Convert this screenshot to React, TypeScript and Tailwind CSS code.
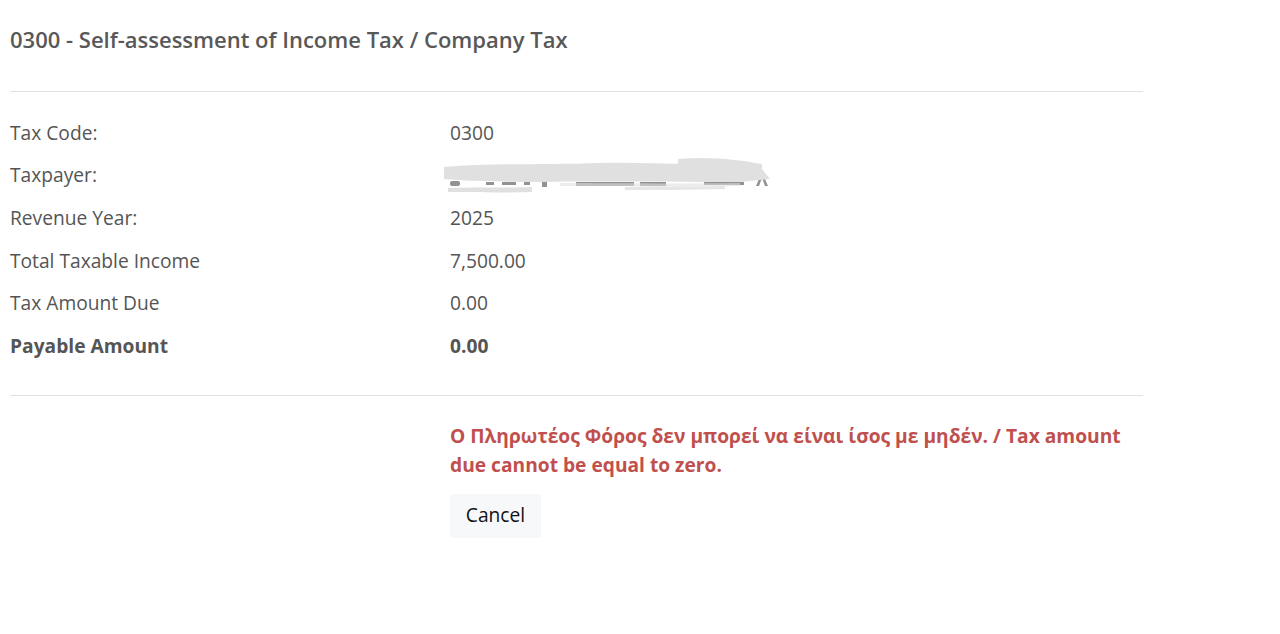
import React from "react";

const ROWS: { label: string; value: string; bold?: boolean; redacted?: boolean }[] = [
  { label: "Tax Code:", value: "0300" },
  { label: "Taxpayer:", value: "", redacted: true },
  { label: "Revenue Year:", value: "2025" },
  { label: "Total Taxable Income", value: "7,500.00" },
  { label: "Tax Amount Due", value: "0.00" },
  { label: "Payable Amount", value: "0.00", bold: true },
];

// scribbled-out taxpayer name
function Redacted() {
  return (
    <svg width="335" height="42" viewBox="0 0 335 42" className="-ml-[10px]">
      <g fill="#4a4a4a" opacity="0.6">
        <rect x="10" y="26" width="10" height="5" rx="2" />
        <rect x="46" y="27" width="8" height="3" />
        <rect x="62" y="27" width="14" height="3" />
        <rect x="84" y="27" width="6" height="3" />
        <rect x="102" y="26" width="5" height="6" />
        <rect x="136" y="27" width="58" height="4" />
        <rect x="200" y="27" width="26" height="4" />
        <rect x="264" y="27" width="40" height="3" />
        <path d="M316 31 L322 17 L328 31 L325 31 L322 23 L319 31 Z" />
      </g>
      <g fill="#e0e0e0">
        <path d="M4 12 C50 8 100 10 160 8 C200 7 230 10 250 8 L322 14 L330 24 L300 27 C220 27 150 26 100 27 C60 27 30 26 4 24 Z" />
        <path d="M238 4 C270 1 300 5 322 9 L322 15 C290 12 260 10 238 9 Z" />
        <path d="M120 28 C170 28 230 29 300 28 L300 31 C230 32 170 31 120 31 Z" opacity="0.6" />
        <path d="M8 33 C40 32 70 33 92 32 L92 37 C60 38 30 37 8 37 Z" />
        <path d="M185 32 C215 31 250 32 285 31 L285 34 C250 35 215 35 185 35 Z" opacity="0.8" />
      </g>
    </svg>
  );
}

export default function App() {
  return (
    <div
      className="min-h-[634px] bg-white pl-[10px] pt-[22px] text-[#555]"
      style={{ fontFamily: '"Open Sans", "Noto Sans", sans-serif' }}
    >
      <div className="w-[1133px]">
        <h1 className="text-[22px] font-semibold leading-[34px] text-[#585858]">
          0300 - Self-assessment of Income Tax / Company Tax
        </h1>
        <hr className="mt-[35px] border-t border-[#e2e2e2]" />
        <div className="pt-[20px] pb-[27px]">
          {ROWS.map((r) => (
            <div key={r.label} className="flex h-[42.6px] items-center text-[19.2px]">
              <div className={`w-[440px] ${r.bold ? "font-bold" : ""}`}>{r.label}</div>
              <div className={r.bold ? "font-bold" : ""}>
                {r.redacted ? <Redacted /> : r.value}
              </div>
            </div>
          ))}
        </div>
        <hr className="border-t border-[#e2e2e2]" />
        <div className="pl-[440px] pt-[25px]">
          <p className="text-[19.2px] font-bold leading-[29px] text-[#c0504d]">
            Ο Πληρωτέος Φόρος δεν μπορεί να είναι ίσος με μηδέν. / Tax amount due cannot be equal to zero.
          </p>
          <button className="mt-[15px] h-[44px] w-[91px] rounded-[3px] bg-[#f7f8fa] text-[19.2px] text-[#111]">
            Cancel
          </button>
        </div>
      </div>
    </div>
  );
}
